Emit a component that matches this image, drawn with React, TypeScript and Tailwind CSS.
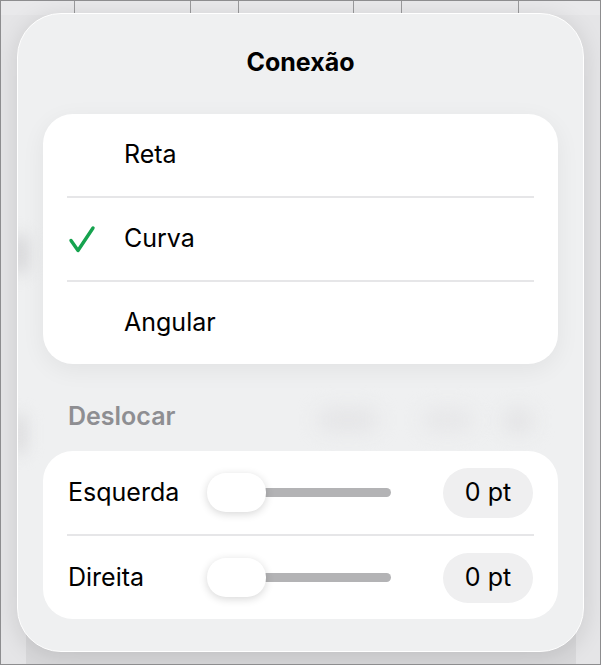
const options = ["Reta", "Curva", "Angular"]

const Check = () => (
  <svg width="28" height="28" viewBox="0 0 28 28" fill="none">
    <path d="M3 15.5L10 25.5L25 3" stroke="#16a34f" strokeWidth="3.4" strokeLinecap="round" strokeLinejoin="round" />
  </svg>
)

const SliderRow = ({ label }: { label: string }) => (
  <div className="flex items-center h-[83px] pl-[25px] pr-[25px]">
    <span className="w-[139px] text-[25px] text-black">{label}</span>
    <div className="flex items-center">
      <div className="w-[59px] h-[39px] rounded-[19px] bg-white shadow-[0_2px_8px_rgba(0,0,0,0.16)] relative z-10" />
      <div className="w-[126px] h-[9px] -ml-[1px] rounded-r-full bg-[#b3b3b5]" />
    </div>
    <div className="ml-auto w-[90px] h-[50px] rounded-full bg-[#efeff0] flex items-center justify-center text-[25px] text-black">
      0 pt
    </div>
  </div>
)

export default function App() {
  const selected = "Curva"
  const cells = [74, 116, 48, 115, 48, 117]

  return (
    <div className="w-[601px] h-[665px] relative overflow-hidden bg-[#e5e5e7] border border-[#8d8d8f] font-['Inter','Liberation_Sans',sans-serif]">
      {/* table behind the popover */}
      <div className="flex h-[14px] bg-[#e9e9eb]">
        {cells.map((w, i) => (
          <div key={i} style={{ width: w }} className="h-full border-r border-[#9a9a9c]" />
        ))}
      </div>
      <div className="absolute bottom-0 left-[25px] w-[550px] h-[40px] bg-[#d9d9db]" />

      <div className="ml-[16px] mt-[-2px] w-[567px] h-[639px] rounded-[44px] bg-[#eff0f1] border border-white shadow-[0_4px_24px_rgba(0,0,0,0.12)] relative z-10 overflow-hidden">
        {/* blurred content showing through */}
        <div className="absolute left-[-8px] top-[220px] w-[18px] h-[40px] rounded-full bg-[#d6d6d8] blur-[8px]" />
        <div className="absolute left-[300px] top-[395px] w-[60px] h-[22px] rounded-full bg-[#e4e4e6] blur-[10px]" />
        <div className="absolute left-[405px] top-[395px] w-[50px] h-[22px] rounded-full bg-[#e6e6e8] blur-[10px]" />
        <div className="absolute left-[485px] top-[395px] w-[30px] h-[24px] rounded-full bg-[#e2e2e4] blur-[10px]" />
        <div className="absolute left-[-6px] top-[400px] w-[14px] h-[40px] rounded-full bg-[#dadadc] blur-[8px]" />

        <div className="relative px-[25px] pt-[32px]">
          <h1 className="h-[32px] leading-[32px] text-center text-[25px] font-bold text-black">Conexão</h1>

          <div className="mt-[36px] bg-white rounded-[30px] shadow-[0_6px_24px_rgba(0,0,0,0.06)]">
            {options.map((opt, i) => (
              <div key={opt}>
                {i > 0 && <div className="mx-[24px] h-[2px] bg-[#e6e6e8]" />}
                <div className="flex items-center h-[82px]">
                  <div className="w-[81px] pl-[25px] flex items-center">
                    {opt === selected && <Check />}
                  </div>
                  <span className="text-[25px] text-black">{opt}</span>
                </div>
              </div>
            ))}
          </div>

          <div className="pl-[25px] mt-[37px] mb-[20px] h-[30px] leading-[30px] text-[25px] font-semibold text-[#8e8e92]">
            Deslocar
          </div>

          <div className="bg-white rounded-[30px]">
            <SliderRow label="Esquerda" />
            <div className="mx-[24px] h-[2px] bg-[#e6e6e8]" />
            <SliderRow label="Direita" />
          </div>
        </div>
      </div>
    </div>
  )
}
